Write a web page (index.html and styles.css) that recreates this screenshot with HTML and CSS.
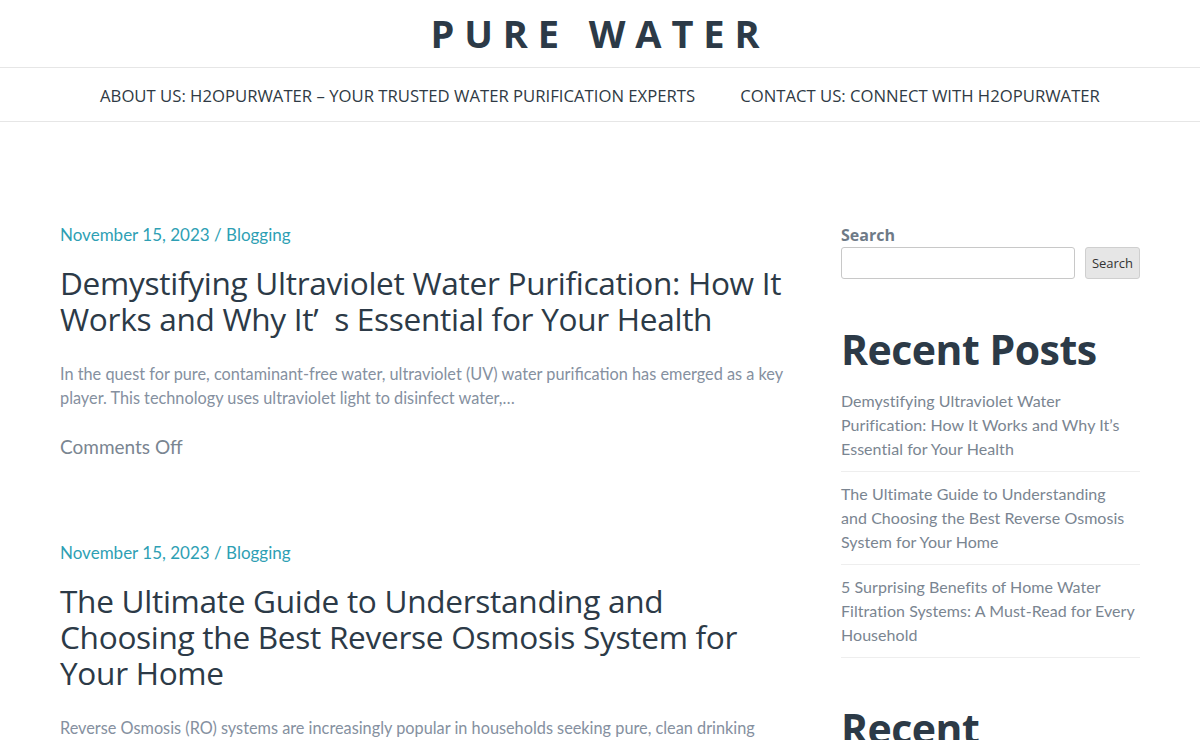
FILE: index.html
```html
<!DOCTYPE html>
<html>
<head>
<meta charset="utf-8">
<link rel="stylesheet" href="styles.css">
</head>
<body>
<header class="site-header">
  <div class="brand">PURE WATER</div>
  <nav class="nav">
    <a href="#">ABOUT US: H2OPURWATER – YOUR TRUSTED WATER PURIFICATION EXPERTS</a>
    <a href="#">CONTACT US: CONNECT WITH H2OPURWATER</a>
  </nav>
</header>
<div class="container">
  <main class="main">
    <article class="post">
      <div class="meta"><a href="#">November 15, 2023</a> / <a href="#">Blogging</a></div>
      <h2 class="post-title">Demystifying Ultraviolet Water Purification: How It Works and Why It’&nbsp;&nbsp;s Essential for Your Health</h2>
      <p class="excerpt">In the quest for pure, contaminant-free water, ultraviolet (UV) water purification has emerged as a key player. This technology uses ultraviolet light to disinfect water,…</p>
      <div class="comments">Comments Off</div>
    </article>
    <article class="post">
      <div class="meta"><a href="#">November 15, 2023</a> / <a href="#">Blogging</a></div>
      <h2 class="post-title">The Ultimate Guide to Understanding and Choosing the Best Reverse Osmosis System for Your Home</h2>
      <p class="excerpt">Reverse Osmosis (RO) systems are increasingly popular in households seeking pure, clean drinking water. Understanding how these systems work is essential…</p>
    </article>
  </main>
  <aside class="sidebar">
    <div class="search-widget">
      <label class="search-label">Search</label>
      <div class="search-row">
        <input class="search-input" type="text">
        <button class="search-btn">Search</button>
      </div>
    </div>
    <div class="widget">
      <h2 class="widget-title">Recent Posts</h2>
      <ul class="recent">
        <li><a href="#">Demystifying Ultraviolet Water Purification: How It Works and Why It’s Essential for Your Health</a></li>
        <li><a href="#">The Ultimate Guide to Understanding and&nbsp;Choosing the Best Reverse Osmosis System for Your Home</a></li>
        <li><a href="#">5 Surprising Benefits of Home Water Filtration Systems: A Must-Read for Every Household</a></li>
      </ul>
    </div>
    <div class="widget">
      <h2 class="widget-title">Recent Comments</h2>
    </div>
  </aside>
</div>
</body>
</html>
```

FILE: styles.css
```css
html, body { margin: 0; padding: 0; }
body {
  font-family: "Open Sans", "DejaVu Sans", sans-serif;
  color: #2c3a47;
  background: #fff;
  overflow: hidden;
}
a { text-decoration: none; color: inherit; }

.site-header { text-align: center; }
.brand {
  font-family: "Open Sans", sans-serif;
  font-weight: 700;
  font-size: 38px;
  letter-spacing: 0.26em;
  color: #2c3a47;
  height: 68px;
  line-height: 66px;
  border-bottom: 1px solid #e6e6e6;
  box-sizing: border-box;
}
.nav {
  display: flex;
  justify-content: center;
  gap: 45px;
  height: 54px;
  align-items: center;
  border-bottom: 1px solid #e6e6e6;
  font-size: 16.7px;
  color: #2f3a44;
  padding-top: 2px;
  box-sizing: border-box;
}

.container {
  display: flex;
  gap: 51px;
  padding: 101px 60px 0 60px;
}
.main { width: 730px; flex: none; }
.sidebar { flex: 1; }

.post { margin-bottom: 83px; }
.meta {
  font-family: "Lato", "Open Sans", sans-serif;
  font-size: 17px;
  color: #2e9fb4;
  line-height: 24px;
}
.meta a { color: #2e9fb4; }
.post-title {
  font-family: "Open Sans", sans-serif;
  font-weight: 400;
  font-size: 31.6px;
  line-height: 36px;
  color: #2c3a47;
  margin: 18px 0 0 0;
  letter-spacing: -0.3px;
}
.excerpt {
  font-family: "Lato", sans-serif;
  font-size: 16.3px;
  line-height: 24px;
  color: #8590a0;
  margin: 25px 0 0 0;
}
.comments {
  font-family: "Lato", sans-serif;
  font-size: 19px;
  color: #7a8591;
  margin-top: 25px;
}

.search-widget { padding-top: 1px; }
.search-label {
  display: block;
  font-family: "Open Sans", sans-serif;
  font-weight: 700;
  font-size: 16px;
  color: #6e7a87;
  line-height: 22px;
}
.search-row {
  display: flex;
  gap: 10px;
  margin-top: 1px;
}
.search-input {
  width: 234px;
  height: 32px;
  box-sizing: border-box;
  border: 1px solid #c8c8c8;
  border-radius: 3px;
  padding: 0 8px;
}
.search-btn {
  height: 32px;
  width: 55px;
  box-sizing: border-box;
  background: #e6e6e6;
  border: 1px solid #cfcfcf;
  border-radius: 3px;
  font-family: "Open Sans", sans-serif;
  font-size: 13px;
  color: #333;
  padding: 0;
}

.widget { margin-top: 45px; }
.widget-title {
  font-family: "Open Sans", sans-serif;
  font-weight: 700;
  font-size: 41px;
  line-height: 50px;
  color: #2c3a47;
  margin: 0 0 15px 0;
  letter-spacing: -0.5px;
}
.recent { list-style: none; margin: 0; padding: 0; }
.recent li {
  font-family: "Lato", sans-serif;
  font-size: 16px;
  line-height: 24px;
  color: #7a8591;
  padding: 0 0 10px 0;
  margin-bottom: 10px;
  border-bottom: 1px solid #eeeeee;
  letter-spacing: 0.05px;
}
.recent li a { color: #7a8591; }
```
